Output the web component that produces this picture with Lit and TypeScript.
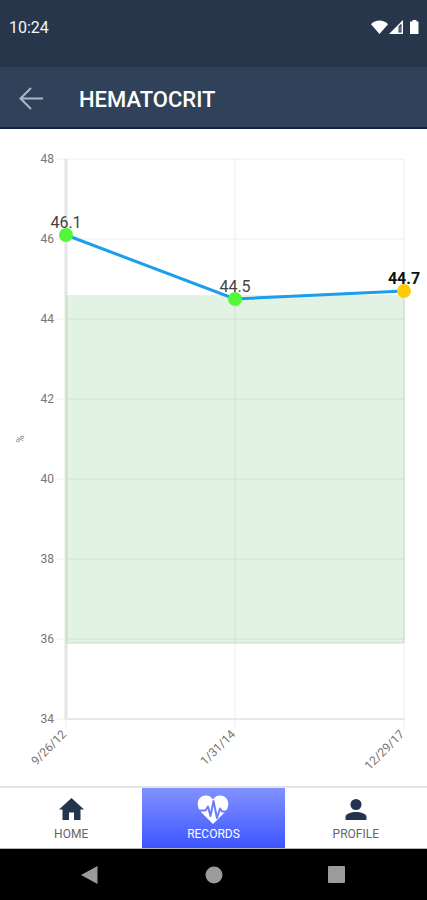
import { LitElement, html, svg, css } from "lit";
import { customElement, property, state } from "lit/decorators.js";
import { classMap } from "lit/directives/class-map.js";

interface Reading {
  date: string;
  value: number;
  inRange: boolean;
  latest?: boolean;
}

const READINGS: Reading[] = [
  { date: "9/26/12", value: 46.1, inRange: true },
  { date: "1/31/14", value: 44.5, inRange: true },
  { date: "12/29/17", value: 44.7, inRange: false, latest: true },
];

@customElement("status-bar")
class StatusBar extends LitElement {
  static styles = css`
    :host {
      display: flex;
      justify-content: space-between;
      align-items: flex-start;
      box-sizing: border-box;
      height: 67px;
      padding: 18px 7px 0 9px;
      background: #27364b;
      color: #f4f6f8;
      font-size: 16px;
      line-height: 20px;
    }
    svg {
      display: block;
      margin-top: 1px;
    }
  `;

  render() {
    return html`
      <span>10:24</span>
      <svg width="50" height="16" viewBox="0 0 50 16" fill="#fff" aria-label="Wi-Fi, signal, battery">
        <path d="M1 5.200C5.500 0.200 13.500 0.200 18 5.200L9.500 15Z" />
        <path d="M19 15 33 1V15Z" />
        <path d="M28.500 7.500 31.500 4.500V13.500H28.500Z" fill="#27364b" />
        <path d="M29.500 7.500h1v5h-1z" fill="#8995a5" />
        <path d="M42.500 1h4v1.500h2V15h-8.500V2.500H42.500Z" />
      </svg>
    `;
  }
}

@customElement("title-bar")
class TitleBar extends LitElement {
  static styles = css`
    :host {
      display: flex;
      align-items: center;
      gap: 32px;
      box-sizing: border-box;
      height: 62px;
      padding: 4px 16px 0 15px;
      background: #30425a;
      border-bottom: 2px solid #15234b;
    }
    button {
      display: flex;
      padding: 0;
      border: 0;
      background: none;
      cursor: pointer;
    }
    h1 {
      margin: 0;
      padding-top: 2px;
      color: #fff;
      font-size: 22px;
      font-weight: 500;
      line-height: 28px;
    }
  `;

  @property() heading = "";

  render() {
    return html`
      <button type="button" aria-label="Back">
        <svg width="32" height="32" viewBox="0 0 32 32" fill="none" stroke="#adb6c2" stroke-width="2">
          <path d="M28 15.500H6M16 5 5.500 15.500 16 26" />
        </svg>
      </button>
      <h1>${this.heading}</h1>
    `;
  }
}

@customElement("trend-chart")
class TrendChart extends LitElement {
  static styles = css`
    :host {
      display: flex;
      min-height: 320px;
      background: #fff;
    }
    svg {
      flex: 1;
      display: block;
      min-width: 0;
      overflow: hidden;
    }
    .grid {
      stroke: #ececec;
    }
    .axis {
      stroke: #e4e4e4;
      stroke-width: 3;
    }
    .base {
      stroke: #e8e8e8;
      stroke-width: 2;
    }
    .band {
      fill: #4caf50;
      fill-opacity: 0.16;
    }
    .band-edge {
      stroke: #c3ddc8;
      fill: none;
    }
    .trend {
      fill: none;
      stroke: #1a9fee;
      stroke-width: 3;
    }
    .tick {
      fill: #757575;
      font-size: 12px;
    }
    .unit {
      fill: #858585;
      font-size: 10px;
    }
    .value {
      fill: #444;
      font-size: 16px;
    }
    .latest {
      fill: #111;
      font-weight: 700;
    }
    .dot {
      fill: #ffcc0c;
    }
    .normal {
      fill: #52f838;
    }
  `;

  @property({ attribute: false }) readings: Reading[] = [];
  @property() unit = "";
  @property({ type: Number }) min = 0;
  @property({ type: Number }) max = 100;
  @property({ type: Number }) low = 0;
  @property({ type: Number }) high = 0;
  @state() private size = { width: 400, height: 600 };

  private observer = new ResizeObserver(([entry]) => {
    const { width, height } = entry.contentRect;
    this.size = { width, height };
  });

  connectedCallback() {
    super.connectedCallback();
    this.observer.observe(this);
  }

  disconnectedCallback() {
    this.observer.disconnect();
    super.disconnectedCallback();
  }

  render() {
    const left = 66;
    const top = 30;
    const right = this.size.width - 23;
    const bottom = this.size.height - 67;
    const x = (i: number) =>
      Math.round(left + ((right - left) * i) / (this.readings.length - 1));
    const y = (v: number) =>
      Math.round(bottom - ((bottom - top) * (v - this.min)) / (this.max - this.min));
    const ticks: number[] = [];
    for (let v = this.max; v >= this.min; v -= 2) ticks.push(v);
    const points = this.readings.map((r, i) => `${x(i)},${y(r.value)}`).join(" ");
    const middle = (top + bottom) / 2;

    return html`
      <svg role="img" aria-label="Hematocrit trend">
        ${ticks.map(
          (v) => svg`
            <line class="grid" x1=${left - 10} x2=${right} y1=${y(v)} y2=${y(v)} />
            <text class="tick" x=${left - 12} y=${y(v) + 4} text-anchor="end">${v}</text>`
        )}
        ${this.readings.map(
          (r, i) => svg`
            <line class="grid" x1=${x(i)} x2=${x(i)} y1=${top} y2=${bottom + 10} />
            <text class="tick" text-anchor="end"
              transform="translate(${x(i) + 1} ${bottom + 16}) rotate(-45)">${r.date}</text>`
        )}
        <line class="axis" x1=${left} x2=${left} y1=${top} y2=${bottom} />
        <line class="base" x1=${left} x2=${right} y1=${bottom} y2=${bottom} />
        <rect class="band" x=${left} y=${y(this.high)} width=${right - left} height=${y(this.low) - y(this.high)} />
        <path class="band-edge" d="M${left} ${y(this.low)}H${right}V${y(this.high)}" />
        <text class="unit" text-anchor="middle" transform="translate(24 ${middle}) rotate(-90)">${this.unit}</text>
        <polyline class="trend" points=${points} />
        ${this.readings.map(
          (r, i) => svg`
            <text class=${classMap({ value: true, latest: !!r.latest })}
              x=${x(i)} y=${y(r.value) - 7} text-anchor="middle">${r.value}</text>
            <circle class=${classMap({ dot: true, normal: r.inRange })} cx=${x(i)} cy=${y(r.value)} r="7" />`
        )}
      </svg>
    `;
  }
}

const homeIcon = svg`<path d="M16.500 4 29 15.500H25.500V26H19V18.500H14V26H7.500V15.500H4Z" />`;
const recordsIcon = svg`
  <path d="M16 30 4 18C-1.500 12 0 2 8.500 1.500 12 1.300 14.500 3 16 5.500 17.500 3 20 1.300 23.500 1.500 32 2 33.500 12 28 18Z" />
  <path d="M1 16.500H8.500L11 12.500 13.500 22 16.500 7 20 24 23 14.500 25 17.500H31" fill="none" stroke="#6b7cff" stroke-width="2" stroke-linejoin="round" />`;
const profileIcon = svg`
  <circle cx="16" cy="10.500" r="5.500" />
  <path d="M5.500 26V23C5.500 19.500 11.500 18 16 18S26.500 19.500 26.500 23V26Z" />`;

const TABS = [
  { label: "HOME", icon: homeIcon },
  { label: "RECORDS", icon: recordsIcon, active: true },
  { label: "PROFILE", icon: profileIcon },
];

@customElement("tab-bar")
class TabBar extends LitElement {
  static styles = css`
    nav {
      display: grid;
      grid-template-columns: repeat(3, 1fr);
      border-top: 2px solid #e4e4e6;
      border-bottom: 1px solid #b4b4b6;
      background: #fff;
    }
    a {
      display: flex;
      flex-direction: column;
      align-items: center;
      height: 54px;
      padding-top: 6px;
      color: #666;
      font-size: 12px;
      line-height: 16px;
      text-decoration: none;
    }
    svg {
      display: block;
      fill: #23344e;
    }
    .active {
      background: linear-gradient(#8291ff, #3d55ff);
      color: #fff;
    }
    .active svg {
      fill: #fff;
    }
  `;

  render() {
    return html`
      <nav>
        ${TABS.map(
          (t) => html`
            <a href="#" class=${classMap({ active: !!t.active })}>
              <svg width="32" height="32" viewBox="0 0 32 32">${t.icon}</svg>
              <span>${t.label}</span>
            </a>`
        )}
      </nav>
    `;
  }
}

@customElement("system-nav")
class SystemNav extends LitElement {
  static styles = css`
    :host {
      display: flex;
      justify-content: center;
      align-items: center;
      gap: 99px;
      height: 51px;
      background: #000;
    }
    button {
      display: flex;
      padding: 0;
      border: 0;
      background: none;
    }
    svg {
      fill: #9b9b9b;
    }
  `;

  render() {
    return html`
      <button type="button" aria-label="Back">
        <svg width="24" height="24" viewBox="0 0 24 24"><path d="M2 12 18.500 3V21Z" /></svg>
      </button>
      <button type="button" aria-label="Home">
        <svg width="24" height="24" viewBox="0 0 24 24"><circle cx="12" cy="12" r="8.500" /></svg>
      </button>
      <button type="button" aria-label="Overview">
        <svg width="24" height="24" viewBox="0 0 24 24"><rect x="3" y="3" width="17" height="17" rx="1" /></svg>
      </button>
    `;
  }
}

@customElement("app-root")
class AppRoot extends LitElement {
  static styles = css`
    :host {
      display: flex;
      flex-direction: column;
      min-height: 100vh;
      background: #fff;
      font-family: Roboto, "Liberation Sans", sans-serif;
    }
    trend-chart {
      flex: 1;
    }
  `;

  render() {
    return html`
      <status-bar></status-bar>
      <title-bar heading="HEMATOCRIT"></title-bar>
      <trend-chart .readings=${READINGS} unit="%" min="34" max="48" low="35.9" high="44.6"></trend-chart>
      <tab-bar></tab-bar>
      <system-nav></system-nav>
    `;
  }
}
